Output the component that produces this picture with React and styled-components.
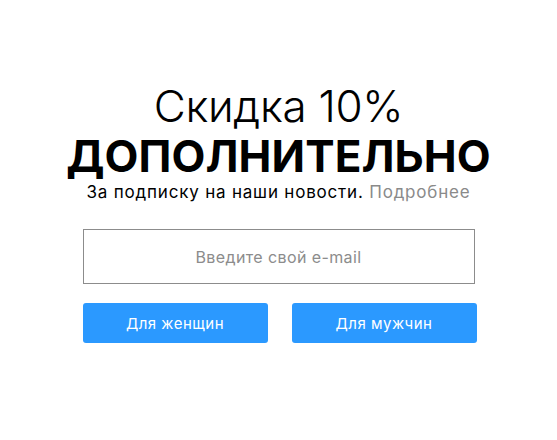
import React from "react";
import styled, { createGlobalStyle } from "styled-components";

const GlobalStyle = createGlobalStyle`
    html, body {
        margin: 0;
        padding: 0;
        background: #ffffff;
    }
    body {
        font-family: Inter, "Noto Sans", sans-serif;
        color: #000;
    }
`;

const Page = styled.div`
    width: 557px;
    height: 440px;
    display: flex;
    flex-direction: column;
    align-items: center;
    padding: 82px 0 0 2px;
    box-sizing: border-box;
`;

const Heading = styled.div`
    display: flex;
    flex-direction: column;
    align-items: center;
    margin-left: -2px;
`;

const Title = styled.h1`
    margin: 0;
    font-size: 44px;
    font-weight: 300;
    line-height: 48px;
    letter-spacing: -0.3px;
`;

const Strong = styled.h2`
    margin: 4px 0 0;
    font-size: 44px;
    font-weight: 700;
    line-height: 44px;
    letter-spacing: 0.1px;
`;

const Lead = styled.p`
    margin: 3px 0 0;
    font-size: 17px;
    line-height: 22px;
    letter-spacing: 0.8px;
`;

const More = styled.a`
    color: #8a8a8a;
    text-decoration: none;
`;

const Form = styled.form`
    width: 394px;
    margin-top: 26px;
    display: flex;
    flex-direction: column;
    gap: 19px;
`;

const Email = styled.input`
    width: 392px;
    height: 55px;
    box-sizing: border-box;
    border: 1px solid #8c8c8c;
    outline: none;
    text-align: center;
    font-family: Inter, "Noto Sans", sans-serif;
    font-size: 16px;
    letter-spacing: 0.4px;
    color: #333;
    &::placeholder {
        color: #8c8c8c;
    }
`;

const Buttons = styled.div`
    display: flex;
    justify-content: space-between;
`;

const Button = styled.button`
    width: 185px;
    height: 40px;
    border: none;
    border-radius: 3px;
    background: #2b99ff;
    color: #fff;
    font-family: Inter, "Noto Sans", sans-serif;
    font-size: 15px;
    letter-spacing: 0.5px;
    cursor: pointer;
`;

export default function App() {
    return (
        <>
            <GlobalStyle />
            <Page>
                <Heading>
                    <Title>Скидка 10%</Title>
                    <Strong>ДОПОЛНИТЕЛЬНО</Strong>
                    <Lead>
                        За подписку на наши новости. <More href="#">Подробнее</More>
                    </Lead>
                </Heading>
                <Form onSubmit={(e) => e.preventDefault()}>
                    <Email type="email" placeholder="Введите свой e-mail" />
                    <Buttons>
                        <Button type="button">Для женщин</Button>
                        <Button type="button">Для мужчин</Button>
                    </Buttons>
                </Form>
            </Page>
        </>
    );
}
